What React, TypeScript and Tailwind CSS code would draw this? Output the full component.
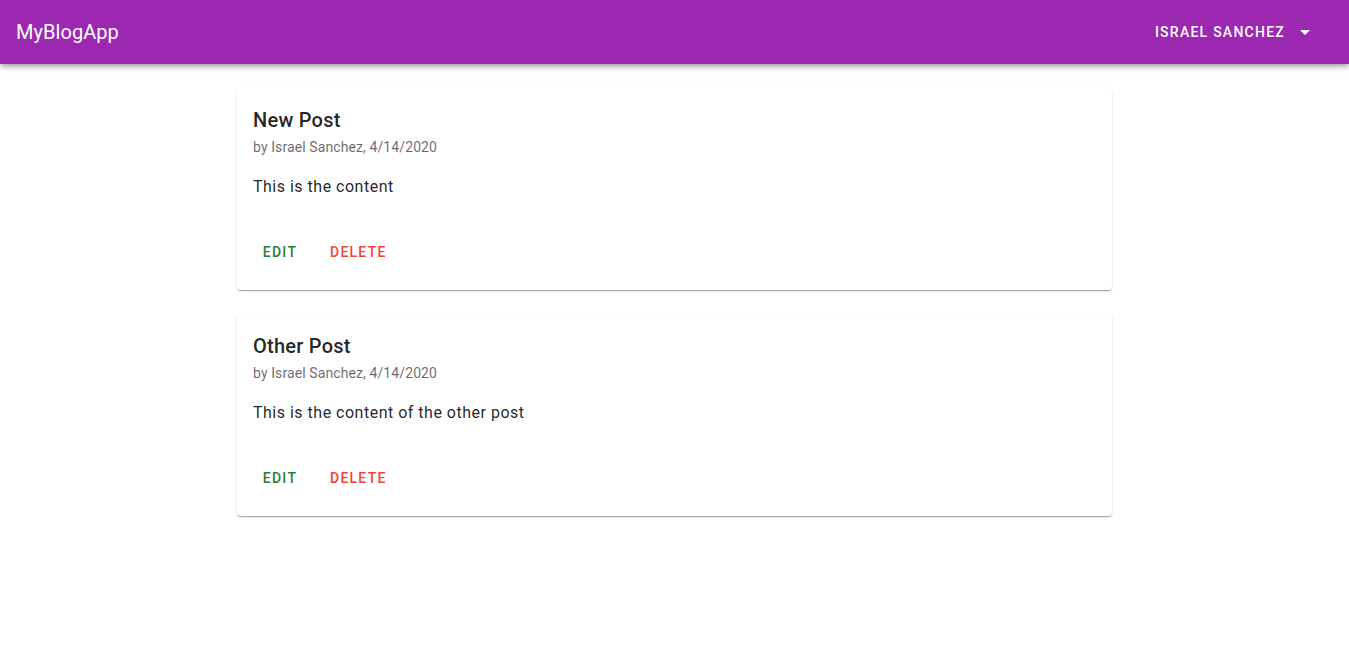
import { ReactNode } from 'react';

type PostType = {
  title: string;
  author: string;
  date: string;
  content: string;
};

const posts: PostType[] = [
  { title: 'New Post', author: 'Israel Sanchez', date: '4/14/2020', content: 'This is the content' },
  { title: 'Other Post', author: 'Israel Sanchez', date: '4/14/2020', content: 'This is the content of the other post' },
];

const ActionButton = ({ children, className }: { children: ReactNode; className: string }) => (
  <button
    className={`min-w-[64px] h-9 px-2 rounded text-sm font-medium uppercase tracking-[1.25px] hover:bg-black/5 ${className}`}
  >
    {children}
  </button>
);

const PostCard = (props: PostType) => {
  const { title, author, date, content } = props;

  return (
    <div className="bg-white rounded shadow-[0_2px_1px_-1px_rgba(0,0,0,0.2),0_1px_1px_0_rgba(0,0,0,0.14),0_1px_3px_0_rgba(0,0,0,0.12)]">
      <div className="px-4 pt-4">
        <h2 className="text-xl font-medium leading-8 tracking-[0.25px] text-black/[0.87]">{title}</h2>
        <p className="mt-px text-sm leading-5 tracking-[0.1px] text-black/[0.6]">
          by {author}, {date}
        </p>
        <p className="mt-[18px] text-base leading-6 text-black/[0.87] tracking-[0.5px]">{content}</p>
      </div>
      <div className="flex items-center gap-[10px] px-[11px] pt-[35px] pb-5">
        <ActionButton className="text-[#2e7d32]">Edit</ActionButton>
        <ActionButton className="text-[#f44336]">Delete</ActionButton>
      </div>
    </div>
  );
};

const App = () => {
  return (
    <div className="min-h-screen bg-white font-['Roboto',sans-serif]">
      <header className="flex items-center h-16 px-4 bg-[#9c27b0] text-white shadow-[0_2px_4px_-1px_rgba(0,0,0,0.2),0_4px_5px_0_rgba(0,0,0,0.14),0_1px_10px_0_rgba(0,0,0,0.12)]">
        <h1 className="text-xl font-normal tracking-[0.05px] flex-1">MyBlogApp</h1>
        <button className="flex items-center h-9 pl-[23px] pr-[12px] mr-[4px] text-sm font-medium uppercase tracking-[1.25px]">
          Israel Sanchez
          <svg viewBox="0 0 24 24" className="w-6 h-6 ml-[8px] fill-white">
            <path d="M7 10l5 5 5-5z" />
          </svg>
        </button>
      </header>
      <main className="w-[875px] mx-auto pt-6 flex flex-col gap-6">
        {posts.map((post) => (
          <PostCard key={post.title} {...post} />
        ))}
      </main>
    </div>
  );
};

export default App;
